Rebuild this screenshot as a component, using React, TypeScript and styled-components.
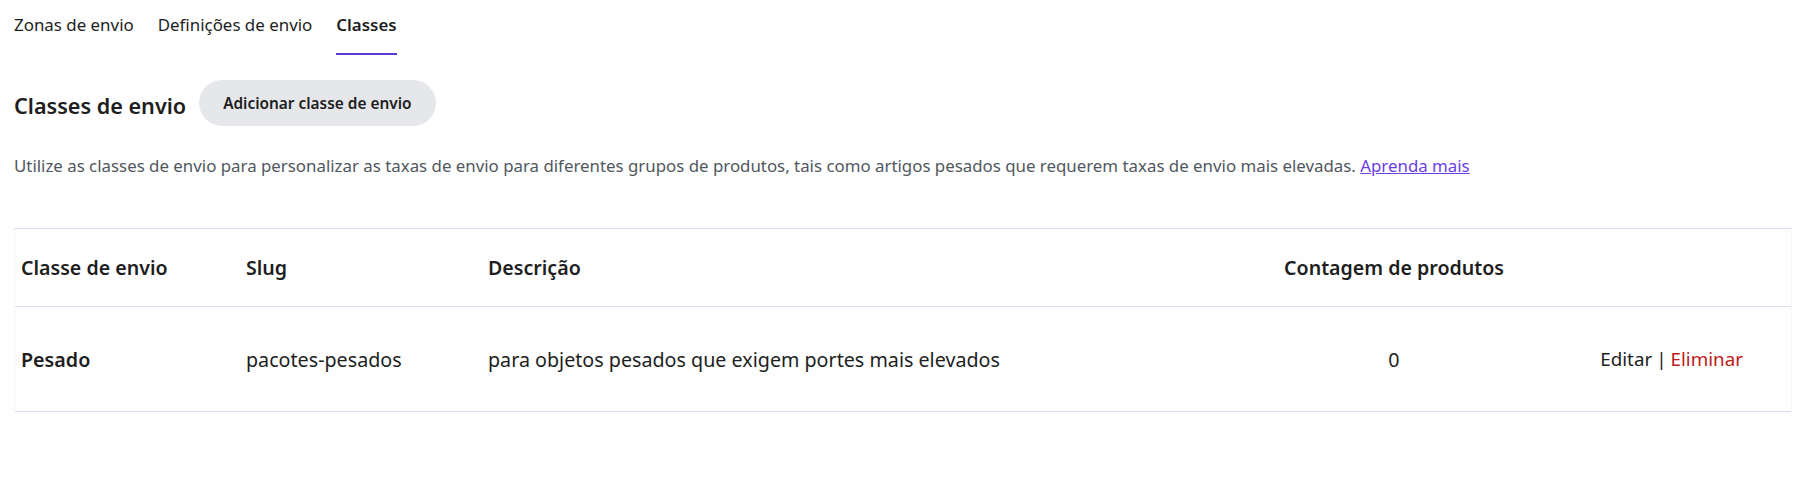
import * as React from 'react';
import styled, { createGlobalStyle } from 'styled-components';

const GlobalStyle = createGlobalStyle`
  html, body {
    margin: 0;
    padding: 0;
    background: #ffffff;
  }
  body {
    font-family: "Noto Sans", "Open Sans", "Liberation Sans", sans-serif;
    color: #1e1e1e;
  }
`;

const Page = styled.div`
  padding: 0 20px 0 14px;
`;

const Tabs = styled.nav`
  display: flex;
  gap: 24px;
`;

const Tab = styled.a<{ active?: boolean }>`
  display: block;
  padding: 13px 0 16px;
  font-size: 16.9px;
  line-height: 24px;
  font-weight: ${(p) => (p.active ? 600 : 400)};
  color: #1e1e1e;
  text-decoration: none;
  border-bottom: 2px solid ${(p) => (p.active ? '#5b3bd4' : 'transparent')};
  cursor: pointer;
`;

const TitleRow = styled.div`
  display: flex;
  align-items: center;
  gap: 13px;
  margin-top: 25px;
`;

const Title = styled.h2`
  margin: 0;
  padding-top: 6px;
  font-size: 21.6px;
  line-height: 30px;
  font-weight: 600;
`;

const AddButton = styled.button`
  height: 46px;
  padding: 0 24px;
  border: none;
  border-radius: 23px;
  background: #e5e7eb;
  color: #1e1e1e;
  font-family: inherit;
  font-size: 15.4px;
  font-weight: 600;
  cursor: pointer;
`;

const Description = styled.p`
  margin: 28px 0 0;
  font-size: 16.85px;
  line-height: 24px;
  color: #50575e;
`;

const Link = styled.a`
  color: #6b3de6;
  text-decoration: underline;
`;

const Table = styled.div`
  margin-top: 50px;
  background: #fefefe;
  border-top: 1px solid #dedbf5;
  border-left: 1px solid #f6f6f8;
  border-right: 1px solid #f6f6f8;
`;

const Row = styled.div<{ head?: boolean }>`
  display: grid;
  grid-template-columns: 225px 242px 1fr 236px 279px;
  align-items: center;
  height: ${(p) => (p.head ? 77 : 104)}px;
  border-bottom: 1px solid #dedbf5;
  font-size: ${(p) => (p.head ? 19.6 : 19.7)}px;
  font-weight: ${(p) => (p.head ? 600 : 400)};
`;

const Cell = styled.div<{ align?: 'left' | 'center' | 'right'; strong?: boolean }>`
  padding: ${(p) => (p.align === 'center' ? '0' : p.align === 'right' ? '0 48px 0 0' : '0 0 0 6px')};
  text-align: ${(p) => p.align || 'left'};
  font-weight: ${(p) => (p.strong ? 600 : 'inherit')};
  white-space: nowrap;
`;

const Actions = styled(Cell)`
  font-size: 18.8px;
`;

const Action = styled.a<{ danger?: boolean }>`
  color: ${(p) => (p.danger ? '#bd1b1b' : '#1e1e1e')};
  text-decoration: none;
  cursor: pointer;
`;

const Sep = styled.span`
  margin: 0 4px;
`;

export default function App() {
  return (
    <Page>
      <GlobalStyle />
      <Tabs>
        <Tab>Zonas de envio</Tab>
        <Tab>Definições de envio</Tab>
        <Tab active>Classes</Tab>
      </Tabs>
      <TitleRow>
        <Title>Classes de envio</Title>
        <AddButton>Adicionar classe de envio</AddButton>
      </TitleRow>
      <Description>
        Utilize as classes de envio para personalizar as taxas de envio para diferentes grupos de produtos, tais
        como artigos pesados que requerem taxas de envio mais elevadas. <Link href="#">Aprenda mais</Link>
      </Description>
      <Table>
        <Row head>
          <Cell>Classe de envio</Cell>
          <Cell>Slug</Cell>
          <Cell>Descrição</Cell>
          <Cell align="center">Contagem de produtos</Cell>
          <Cell align="right" />
        </Row>
        <Row>
          <Cell strong>Pesado</Cell>
          <Cell>pacotes-pesados</Cell>
          <Cell>para objetos pesados que exigem portes mais elevados</Cell>
          <Cell align="center">0</Cell>
          <Actions align="right">
            <Action>Editar</Action>
            <Sep>|</Sep>
            <Action danger>Eliminar</Action>
          </Actions>
        </Row>
      </Table>
    </Page>
  );
}
